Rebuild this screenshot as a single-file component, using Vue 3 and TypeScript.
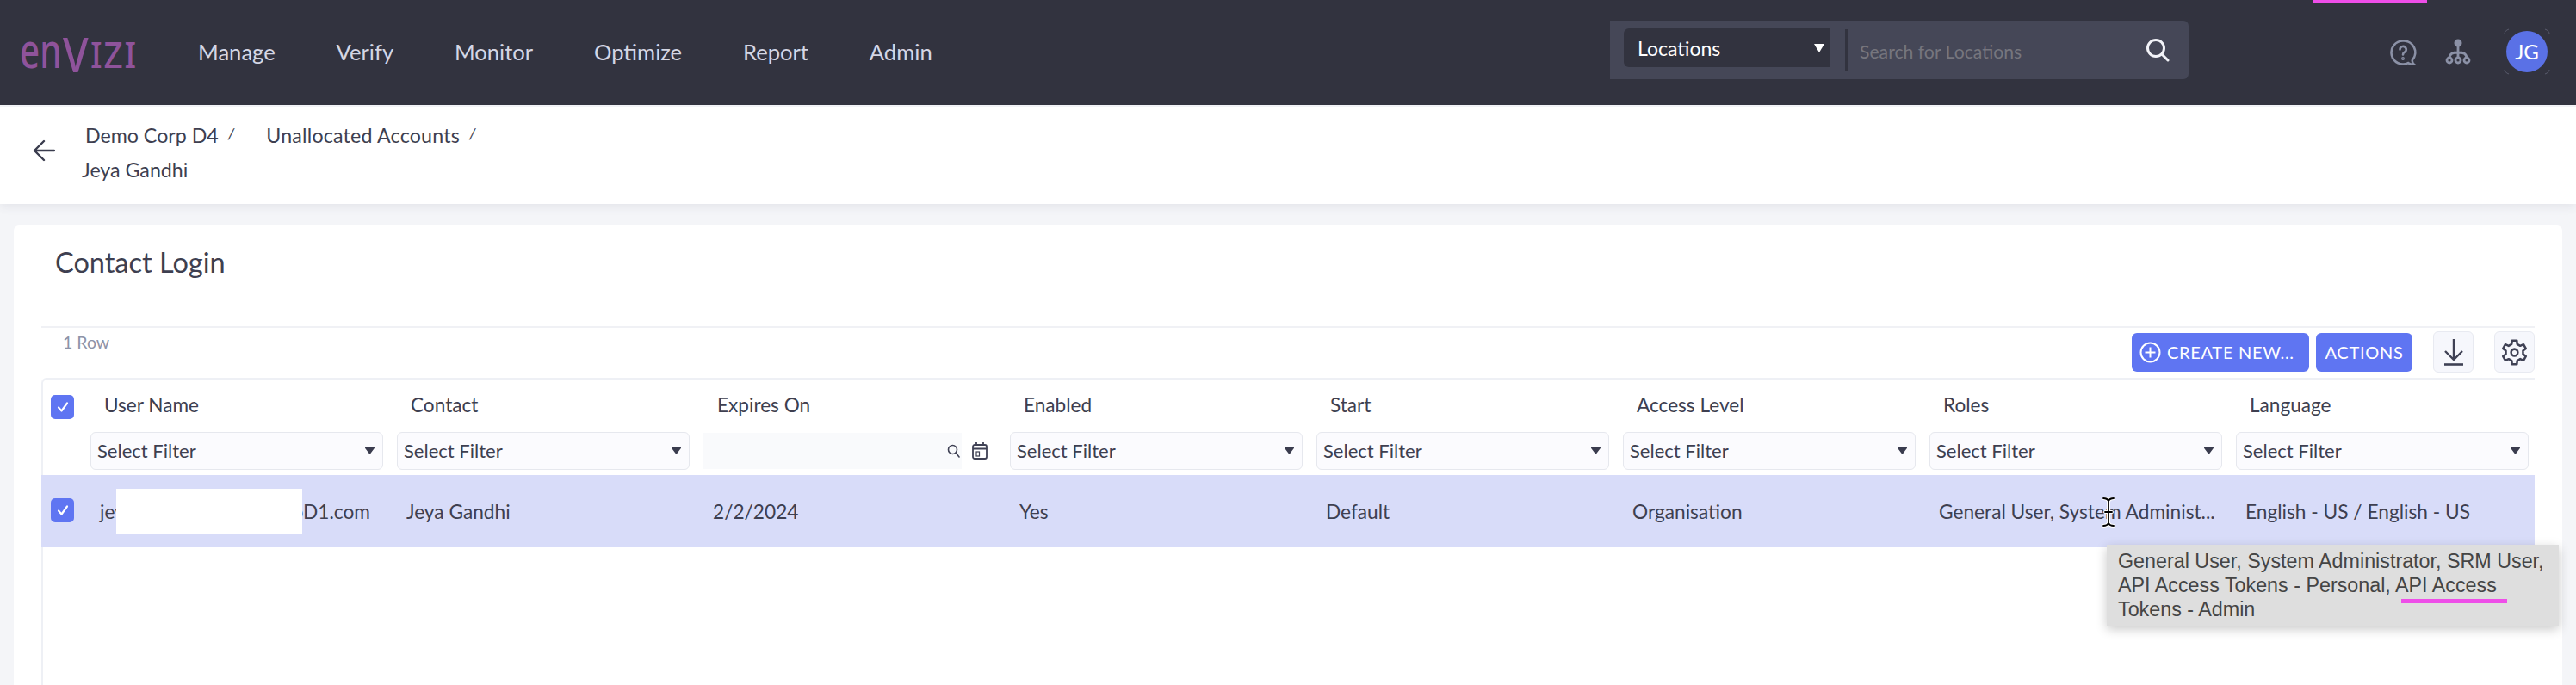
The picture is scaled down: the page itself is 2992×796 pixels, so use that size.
<script setup lang="ts">
const navItems = ["Manage", "Verify", "Monitor", "Optimize", "Report", "Admin"];

const columns = ["User Name", "Contact", "Expires On", "Enabled", "Start", "Access Level", "Roles", "Language"];

const cells = [
  "Jeya Gandhi",
  "2/2/2024",
  "Yes",
  "Default",
  "Organisation",
  "General User, System Administ...",
  "English - US / English - US",
];

const roleTip =
  "General User, System Administrator, SRM User, API Access Tokens - Personal, API Access Tokens - Admin";

// six lobed cog, same shape as the toolbar one
const gearPath = (() => {
  const pts: string[] = [];
  for (let i = 0; i < 6; i++) {
    const a = (i * Math.PI) / 3 - Math.PI / 2;
    const at = (r: number, d: number) => {
      const x = 16 + r * Math.cos(a + d);
      const y = 16 + r * Math.sin(a + d);
      return `${x.toFixed(2)} ${y.toFixed(2)}`;
    };
    pts.push(`${i === 0 ? "M" : "L"}${at(14.5, -0.2)}`);
    pts.push(`L${at(14.5, 0.2)}`);
    pts.push(`L${at(10.5, 0.32)}`);
    pts.push(`L${at(10.5, 0.72)}`);
  }
  return pts.join(" ") + "Z";
})();
</script>

<template>
  <div class="page">
    <header class="topbar">
      <div class="logo"><span class="logo-en">en</span><span class="logo-v">V</span><span class="logo-izi">IZI</span></div>
      <nav class="nav">
        <a v-for="item in navItems" :key="item">{{ item }}</a>
      </nav>
      <div class="search">
        <div class="search-type">
          <span>Locations</span>
          <svg width="12" height="10" viewBox="0 0 12 10"><path d="M0 0h12L6 10z" fill="#fff" /></svg>
        </div>
        <div class="search-sep"></div>
        <span class="search-text">Search for Locations</span>
        <svg class="search-icon" width="28" height="28" viewBox="0 0 28 28" fill="none" stroke="#f2f3f8" stroke-width="3" stroke-linecap="round">
          <circle cx="12" cy="12" r="9.5" />
          <path d="M19 19l7 7" />
        </svg>
      </div>
      <div class="top-icons">
        <svg width="32" height="32" viewBox="0 0 32 32" fill="none" stroke="#8b91a6" stroke-width="2.6" stroke-linecap="round">
          <path d="M16 2.5a13.5 13.5 0 1 0 6 25.6c2 1.4 4.500 2 6.500 1.400-1.500-1.300-1.800-2.500-1.700-4.500A13.500 13.500 0 0 0 16 2.500z" />
          <path d="M12.500 12.500a3.600 3.600 0 1 1 5.400 3.100c-1.200.7-1.900 1.500-1.900 2.900" />
          <circle cx="16" cy="23" r="0.6" fill="#8b91a6" />
        </svg>
        <svg class="org" width="30" height="30" viewBox="0 0 30 30" fill="none" stroke="#8b91a6" stroke-width="2.8">
          <circle cx="15" cy="5" r="4.500" fill="#8b91a6" stroke="none" />
          <path d="M15 9v14M5 23c0-6 4-7 10-7s10 1 10 7" />
          <circle cx="5" cy="25" r="3" fill="#32333f" />
          <circle cx="15" cy="25" r="3" fill="#32333f" />
          <circle cx="25" cy="25" r="3" fill="#32333f" />
        </svg>
        <div class="avatar">
          JG
          <svg class="avatar-ring" width="54" height="54" viewBox="0 0 54 54" fill="none" stroke="#595b6c" stroke-width="1">
            <path d="M1 6c0-2 2-4 5-5M48 1c3 1 5 3 5 5M53 48c0 2-2 4-5 5M6 53c-3-1-5-3-5-5" />
          </svg>
        </div>
      </div>
      <i class="mark mark-top"></i>
    </header>

    <section class="crumbs">
      <svg class="back" width="26" height="26" viewBox="0 0 26 26" fill="none" stroke="#3a3c4e" stroke-width="2.4" stroke-linecap="round" stroke-linejoin="round">
        <path d="M25 13H2M13 2L2 13l11 11" />
      </svg>
      <div class="crumb-lines">
        <div class="crumb-top">
          <span class="crumb">Demo Corp D4</span><i class="slash">/</i>
          <span class="crumb second">Unallocated Accounts</span><i class="slash">/</i>
        </div>
        <div class="crumb current">Jeya Gandhi</div>
      </div>
    </section>

    <main class="card">
      <h1 class="title">Contact Login</h1>

      <div class="toolbar">
        <span class="rows">1 Row</span>
        <div class="tools">
          <button class="btn create">
            <svg width="25" height="25" viewBox="0 0 25 25" fill="none" stroke="#fff" stroke-width="2">
              <circle cx="12.500" cy="12.500" r="11" />
              <path d="M12.500 6.500v12M6.500 12.500h12" />
            </svg>
            CREATE NEW...
          </button>
          <button class="btn actions">ACTIONS</button>
          <button class="tool first">
            <svg width="24" height="32" viewBox="0 0 24 32" fill="none" stroke="#3f4154" stroke-width="2.400">
              <path d="M12 1v24M2 15l10 10 10-10" stroke-linejoin="round" />
              <path d="M1 30.500h22" stroke-width="2.600" />
            </svg>
          </button>
          <button class="tool">
            <svg width="31" height="31" viewBox="0 0 32 32" fill="none" stroke="#3f4154" stroke-width="2.600" stroke-linejoin="round">
              <path :d="gearPath" />
              <circle cx="16" cy="16" r="4" />
            </svg>
          </button>
        </div>
      </div>

      <div class="table">
        <div class="grid head">
          <div class="check-cell">
            <span class="check">
              <svg width="18" height="18" viewBox="0 0 18 18" fill="none" stroke="#fff" stroke-width="2.200" stroke-linecap="round" stroke-linejoin="round"><path d="M4 9.500l3.500 4L14 4.500" /></svg>
            </span>
          </div>
          <div v-for="col in columns" :key="col" class="head-cell">{{ col }}</div>
        </div>

        <div class="grid filters">
          <div></div>
          <template v-for="(col, i) in columns" :key="col">
            <div v-if="i === 2" class="date-filter">
              <div class="date-input">
                <svg width="15" height="16" viewBox="0 0 15 16" fill="none" stroke="#3f4154" stroke-width="1.600" stroke-linecap="round">
                  <circle cx="6.500" cy="6.500" r="5" />
                  <path d="M10.500 10.500l3.500 4.500" />
                </svg>
              </div>
              <svg width="18" height="20" viewBox="0 0 18 20" fill="none" stroke="#3f4154" stroke-width="1.800">
                <rect x="1" y="3" width="16" height="16" rx="2" />
                <path d="M1 7.500h16M5 0v4M13 0v4" />
                <rect x="5" y="11" width="3.500" height="5" stroke-width="1.200" />
              </svg>
            </div>
            <div v-else class="filter">
              <span>Select Filter</span>
              <svg width="11" height="9" viewBox="0 0 11 9"><path d="M1 0.500h9a1 1 0 0 1 .8 1.500L6.300 8a1 1 0 0 1-1.600 0L.2 2A1 1 0 0 1 1 .5z" fill="#3a3c4e" /></svg>
            </div>
          </template>
        </div>

        <div class="grid row">
          <div class="check-cell">
            <span class="check">
              <svg width="18" height="18" viewBox="0 0 18 18" fill="none" stroke="#fff" stroke-width="2.200" stroke-linecap="round" stroke-linejoin="round"><path d="M4 9.500l3.500 4L14 4.500" /></svg>
            </span>
          </div>
          <div class="cell user">
            <span>jey</span><span class="user-end">oD1.com</span>
            <i class="redact"></i>
          </div>
          <div v-for="(text, i) in cells" :key="i" class="cell">{{ text }}</div>
        </div>

        <div class="tip">{{ roleTip }}</div>
        <i class="mark mark-tip"></i>
        <svg class="ibeam" width="18" height="36" viewBox="0 0 18 36" fill="none" stroke-linecap="round">
          <path d="M3 2c3 0 5 1 6 3 1-2 3-3 6-3M9 5v26M3 34c3 0 5-1 6-3 1 2 3 3 6 3M5 18h8" stroke="#fff" stroke-width="4" />
          <path d="M3 2c3 0 5 1 6 3 1-2 3-3 6-3M9 5v26M3 34c3 0 5-1 6-3 1 2 3 3 6 3M5 18h8" stroke="#000" stroke-width="1.800" />
        </svg>
      </div>
    </main>
  </div>
</template>

<style scoped>
.page {
  display: flex;
  flex-direction: column;
  width: 2992px;
  height: 796px;
  overflow: hidden;
  background: #f4f5f8;
  font-family: "Lato", "Noto Sans", sans-serif;
  color: #3e3f50;
}

.topbar {
  position: relative;
  display: flex;
  align-items: center;
  flex: none;
  height: 122px;
  padding-left: 23px;
  background: #32333f;
}

.logo {
  display: flex;
  align-items: baseline;
  width: 130px;
  height: 60px;
  margin-bottom: 8px;
  color: #8f539b;
  font-family: "Noto Sans", sans-serif;
  font-weight: 500;
  line-height: 60px;
}

.logo-en {
  width: 50px;
  font-size: 56px;
  transform: scaleX(0.72);
  transform-origin: left;
}

.logo-v {
  width: 32px;
  font-size: 56px;
  transform: translateY(5px) scaleX(0.86);
  transform-origin: left;
}

.logo-izi {
  font-size: 42px;
  letter-spacing: 2px;
  transform: scaleX(0.92);
  transform-origin: left;
}

.nav {
  display: flex;
  gap: 70.800px;
  margin-left: 77px;
  margin-bottom: 2px;
  font-size: 25.600px;
  color: #d4d6e4;
}

.search {
  display: flex;
  align-items: center;
  width: 672px;
  height: 68px;
  margin: 0 0 6px auto;
  padding-left: 16px;
  box-sizing: border-box;
  background: #454757;
  border-radius: 0 6px 6px 0;
}

.search-type {
  display: flex;
  align-items: center;
  justify-content: space-between;
  flex: none;
  width: 240px;
  height: 45px;
  margin-bottom: 5px;
  padding: 0 7px 0 16px;
  box-sizing: border-box;
  background: #32333f;
  border-radius: 6px 0 0 6px;
  color: #fff;
  font-size: 23px;
}

.search-sep {
  flex: none;
  width: 3px;
  height: 48px;
  margin: 0 14px 0 17px;
  background: #32333f;
}

.search-text {
  flex: 1;
  padding-top: 4px;
  font-size: 21.200px;
  color: #76767e;
}

.search-icon {
  margin-right: 22px;
  margin-bottom: 1px;
}

.top-icons {
  display: flex;
  align-items: center;
  margin-left: 233px;
  padding-right: 33px;
}

.org {
  margin-left: 33px;
  margin-bottom: 3px;
}

.avatar {
  position: relative;
  width: 48px;
  height: 48px;
  margin-left: 41px;
  margin-bottom: 2px;
  border-radius: 50%;
  background: #5a71e6;
  color: #fff;
  font-size: 24px;
  line-height: 48px;
  text-align: center;
}

.avatar-ring {
  position: absolute;
  top: -3px;
  left: -3px;
}

.mark {
  position: absolute;
  background: #ee4ee8;
}

.mark-top {
  top: 0;
  left: 2686px;
  width: 133px;
  height: 3px;
}

.crumbs {
  display: flex;
  flex: none;
  height: 113px;
  margin-top: 2px;
  padding-left: 38px;
  background: #fff;
  box-shadow: 0 4px 10px rgba(60, 64, 90, 0.08);
}

.back {
  margin-top: 38px;
}

.crumb-lines {
  margin-left: 31px;
  padding-top: 18px;
  font-size: 23.200px;
  line-height: 30px;
}

.crumb-top {
  display: flex;
  margin-left: 4px;
}

.slash {
  margin-left: 11px;
  font-size: 18px;
  line-height: 26px;
}

.crumb.second {
  margin-left: 37px;
  letter-spacing: 0.2px;
}

.current {
  margin-top: 10px;
}

.card {
  position: relative;
  flex: 1;
  margin: 25px 16px 0;
  padding: 20px 32px 0;
  background: #fff;
  border-radius: 6px 6px 0 0;
}

.title {
  margin: 0 0 51px 16px;
  font-size: 32.500px;
  font-weight: 400;
  line-height: 46px;
}

.toolbar {
  display: flex;
  justify-content: space-between;
  height: 58px;
  border-top: 2px solid #f0f1f5;
}

.rows {
  margin: 5px 0 0 25px;
  color: #8d93a8;
  font-size: 19.500px;
  line-height: 24px;
}

.tools {
  display: flex;
  align-items: center;
  height: 48px;
  margin-top: 4px;
}

.btn {
  display: flex;
  align-items: center;
  height: 45px;
  padding: 0;
  border: 0;
  border-radius: 6px;
  background: #5f75f2;
  color: #fff;
  font-family: inherit;
  font-size: 20px;
  letter-spacing: 0.7px;
  white-space: nowrap;
}

.create {
  gap: 7px;
  width: 206px;
  padding-left: 9px;
}

.actions {
  justify-content: center;
  width: 112px;
  margin-left: 8px;
}

.tool {
  display: flex;
  align-items: center;
  justify-content: center;
  width: 47px;
  height: 48px;
  margin-left: 24px;
  padding: 0;
  border: 1px solid #e8eaf1;
  border-radius: 6px;
  background: #f6f7fc;
}

.table {
  position: relative;
  height: 357px;
  border-top: 2px solid #eef0f5;
  border-top-left-radius: 6px;
  box-shadow: inset 2px 0 0 #eef0f5;
}

.grid {
  display: grid;
  grid-template-columns: 57px repeat(7, 356px) 1fr;
  align-items: center;
}

.head {
  height: 61px;
  font-size: 22.600px;
}

.head .check-cell {
  margin-top: 3px;
}

.head-cell {
  padding: 0 0 3px 16px;
}

.check-cell {
  display: flex;
  padding-left: 11px;
}

.check {
  display: flex;
  align-items: center;
  justify-content: center;
  width: 27px;
  height: 28px;
  border-radius: 5px;
  background: #5f75f2;
}

.filters {
  align-items: start;
  height: 50px;
  font-size: 22px;
}

.filter {
  display: flex;
  align-items: center;
  justify-content: space-between;
  width: 340px;
  height: 44px;
  padding: 0 9px 2px 7px;
  box-sizing: border-box;
  background: #fbfbfe;
  border: 1px solid #e6e8ee;
  border-radius: 6px;
}

.date-filter {
  display: flex;
  align-items: center;
  gap: 12px;
  width: 340px;
  height: 44px;
}

.date-input {
  display: flex;
  align-items: center;
  justify-content: flex-end;
  width: 300px;
  height: 42px;
  padding-right: 2px;
  box-sizing: border-box;
  background: #f9fafc;
}

.row {
  height: 84px;
  background: #d8dcf9;
  font-size: 22.700px;
}

.row .check-cell {
  margin-top: -2px;
}

.cell {
  position: relative;
  padding: 0 0 0 11px;
  white-space: nowrap;
}

.user {
  display: flex;
  justify-content: space-between;
  padding-right: 31px;
}

.redact {
  position: absolute;
  top: -13px;
  left: 30px;
  width: 216px;
  height: 52px;
  background: #fff;
}

.tip {
  position: absolute;
  top: 192px;
  left: 2399px;
  width: 525px;
  height: 94px;
  padding: 5px 13px;
  box-sizing: border-box;
  background: #dedede;
  box-shadow: 0 4px 12px rgba(0, 0, 0, 0.22);
  color: #454545;
  font-family: "Liberation Sans", Arial, sans-serif;
  font-size: 23.300px;
  line-height: 28px;
}

.mark-tip {
  top: 255px;
  left: 2741px;
  width: 123px;
  height: 5px;
}

.ibeam {
  position: absolute;
  top: 136px;
  left: 2392px;
}
</style>

<style>
html,
body {
  margin: 0;
  background: #f4f5f8;
}
</style>
